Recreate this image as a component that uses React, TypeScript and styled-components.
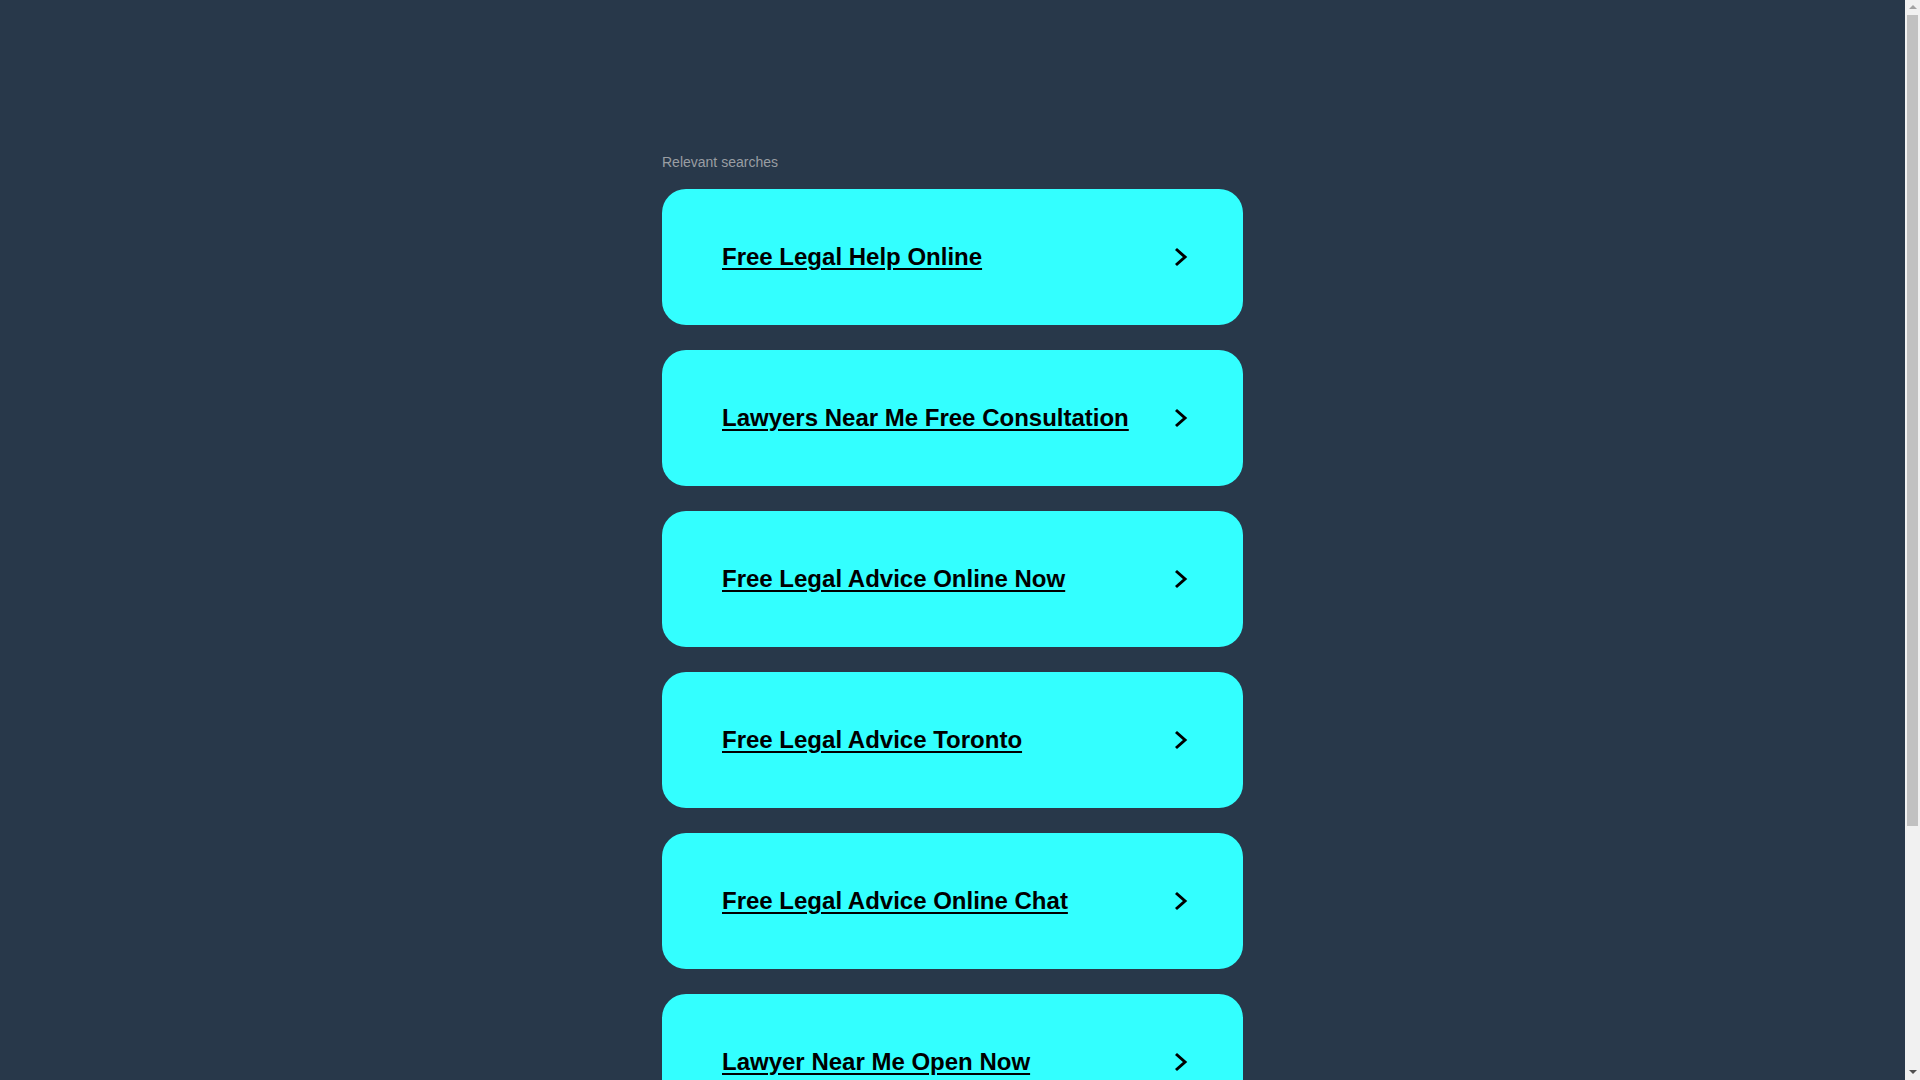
import styled, { createGlobalStyle } from "styled-components";

const searches = [
  "Free Legal Help Online",
  "Lawyers Near Me Free Consultation",
  "Free Legal Advice Online Now",
  "Free Legal Advice Toronto",
  "Free Legal Advice Online Chat",
  "Lawyer Near Me Open Now",
];

const GlobalStyle = createGlobalStyle`
  html, body {
    margin: 0;
    padding: 0;
    background: #28384a;
    font-family: "Liberation Sans", Arial, sans-serif;
  }
  html::-webkit-scrollbar, body::-webkit-scrollbar {
    display: none;
  }
`;

function Chevron() {
  return (
    <svg width="14" height="20" viewBox="0 0 14 20" fill="none">
      <polyline
        points="2,2 11,10 2,18"
        stroke="#000"
        strokeWidth="3"
        strokeLinejoin="miter"
      />
    </svg>
  );
}

function App() {
  return (
    <>
      <GlobalStyle />
      <Page>
        <Results>
          <Label>Relevant searches</Label>
          <List>
            {searches.map((term) => (
              <Card key={term} href="#">
                <Term>{term}</Term>
                <Chevron />
              </Card>
            ))}
          </List>
        </Results>
      </Page>
      <Scrollbar>
        <Arrow $dir="up" />
        <Thumb />
        <Arrow $dir="down" />
      </Scrollbar>
    </>
  );
}

export default App;

const Page = styled.div`
  min-height: 1432px;
  margin-right: 15px;
  padding-top: 154px;
  box-sizing: border-box;
`;

const Results = styled.div`
  width: 581px;
  margin: 0 auto;
`;

const Label = styled.div`
  font-size: 14px;
  line-height: 16px;
  color: #9a9ea3;
  margin-bottom: 19px;
`;

const List = styled.div`
  display: flex;
  flex-direction: column;
  gap: 25px;
`;

const Card = styled.a`
  display: flex;
  align-items: center;
  justify-content: space-between;
  height: 136px;
  padding: 0 55px 0 60px;
  box-sizing: border-box;
  background: #33ffff;
  border-radius: 24px;
  color: #000;
  text-decoration: none;
`;

const Term = styled.span`
  font-size: 24px;
  font-weight: 700;
  text-decoration: underline;
  text-underline-offset: 3px;
`;

const Scrollbar = styled.div`
  position: fixed;
  top: 0;
  right: 0;
  width: 15px;
  height: 100vh;
  background: #f1f1f1;
  display: flex;
  flex-direction: column;
  align-items: center;
`;

const Thumb = styled.div`
  width: 11px;
  height: 811px;
  background: #c1c1c1;
`;

const Arrow = styled.div<{ $dir: "up" | "down" }>`
  width: 0;
  height: 0;
  border-left: 4px solid transparent;
  border-right: 4px solid transparent;
  ${({ $dir }) =>
    $dir === "up"
      ? `border-bottom: 4px solid #a3a3a3; margin: 5px 0 6px;`
      : `border-top: 4px solid #505050; margin-top: auto; margin-bottom: 6px;`}
`;
